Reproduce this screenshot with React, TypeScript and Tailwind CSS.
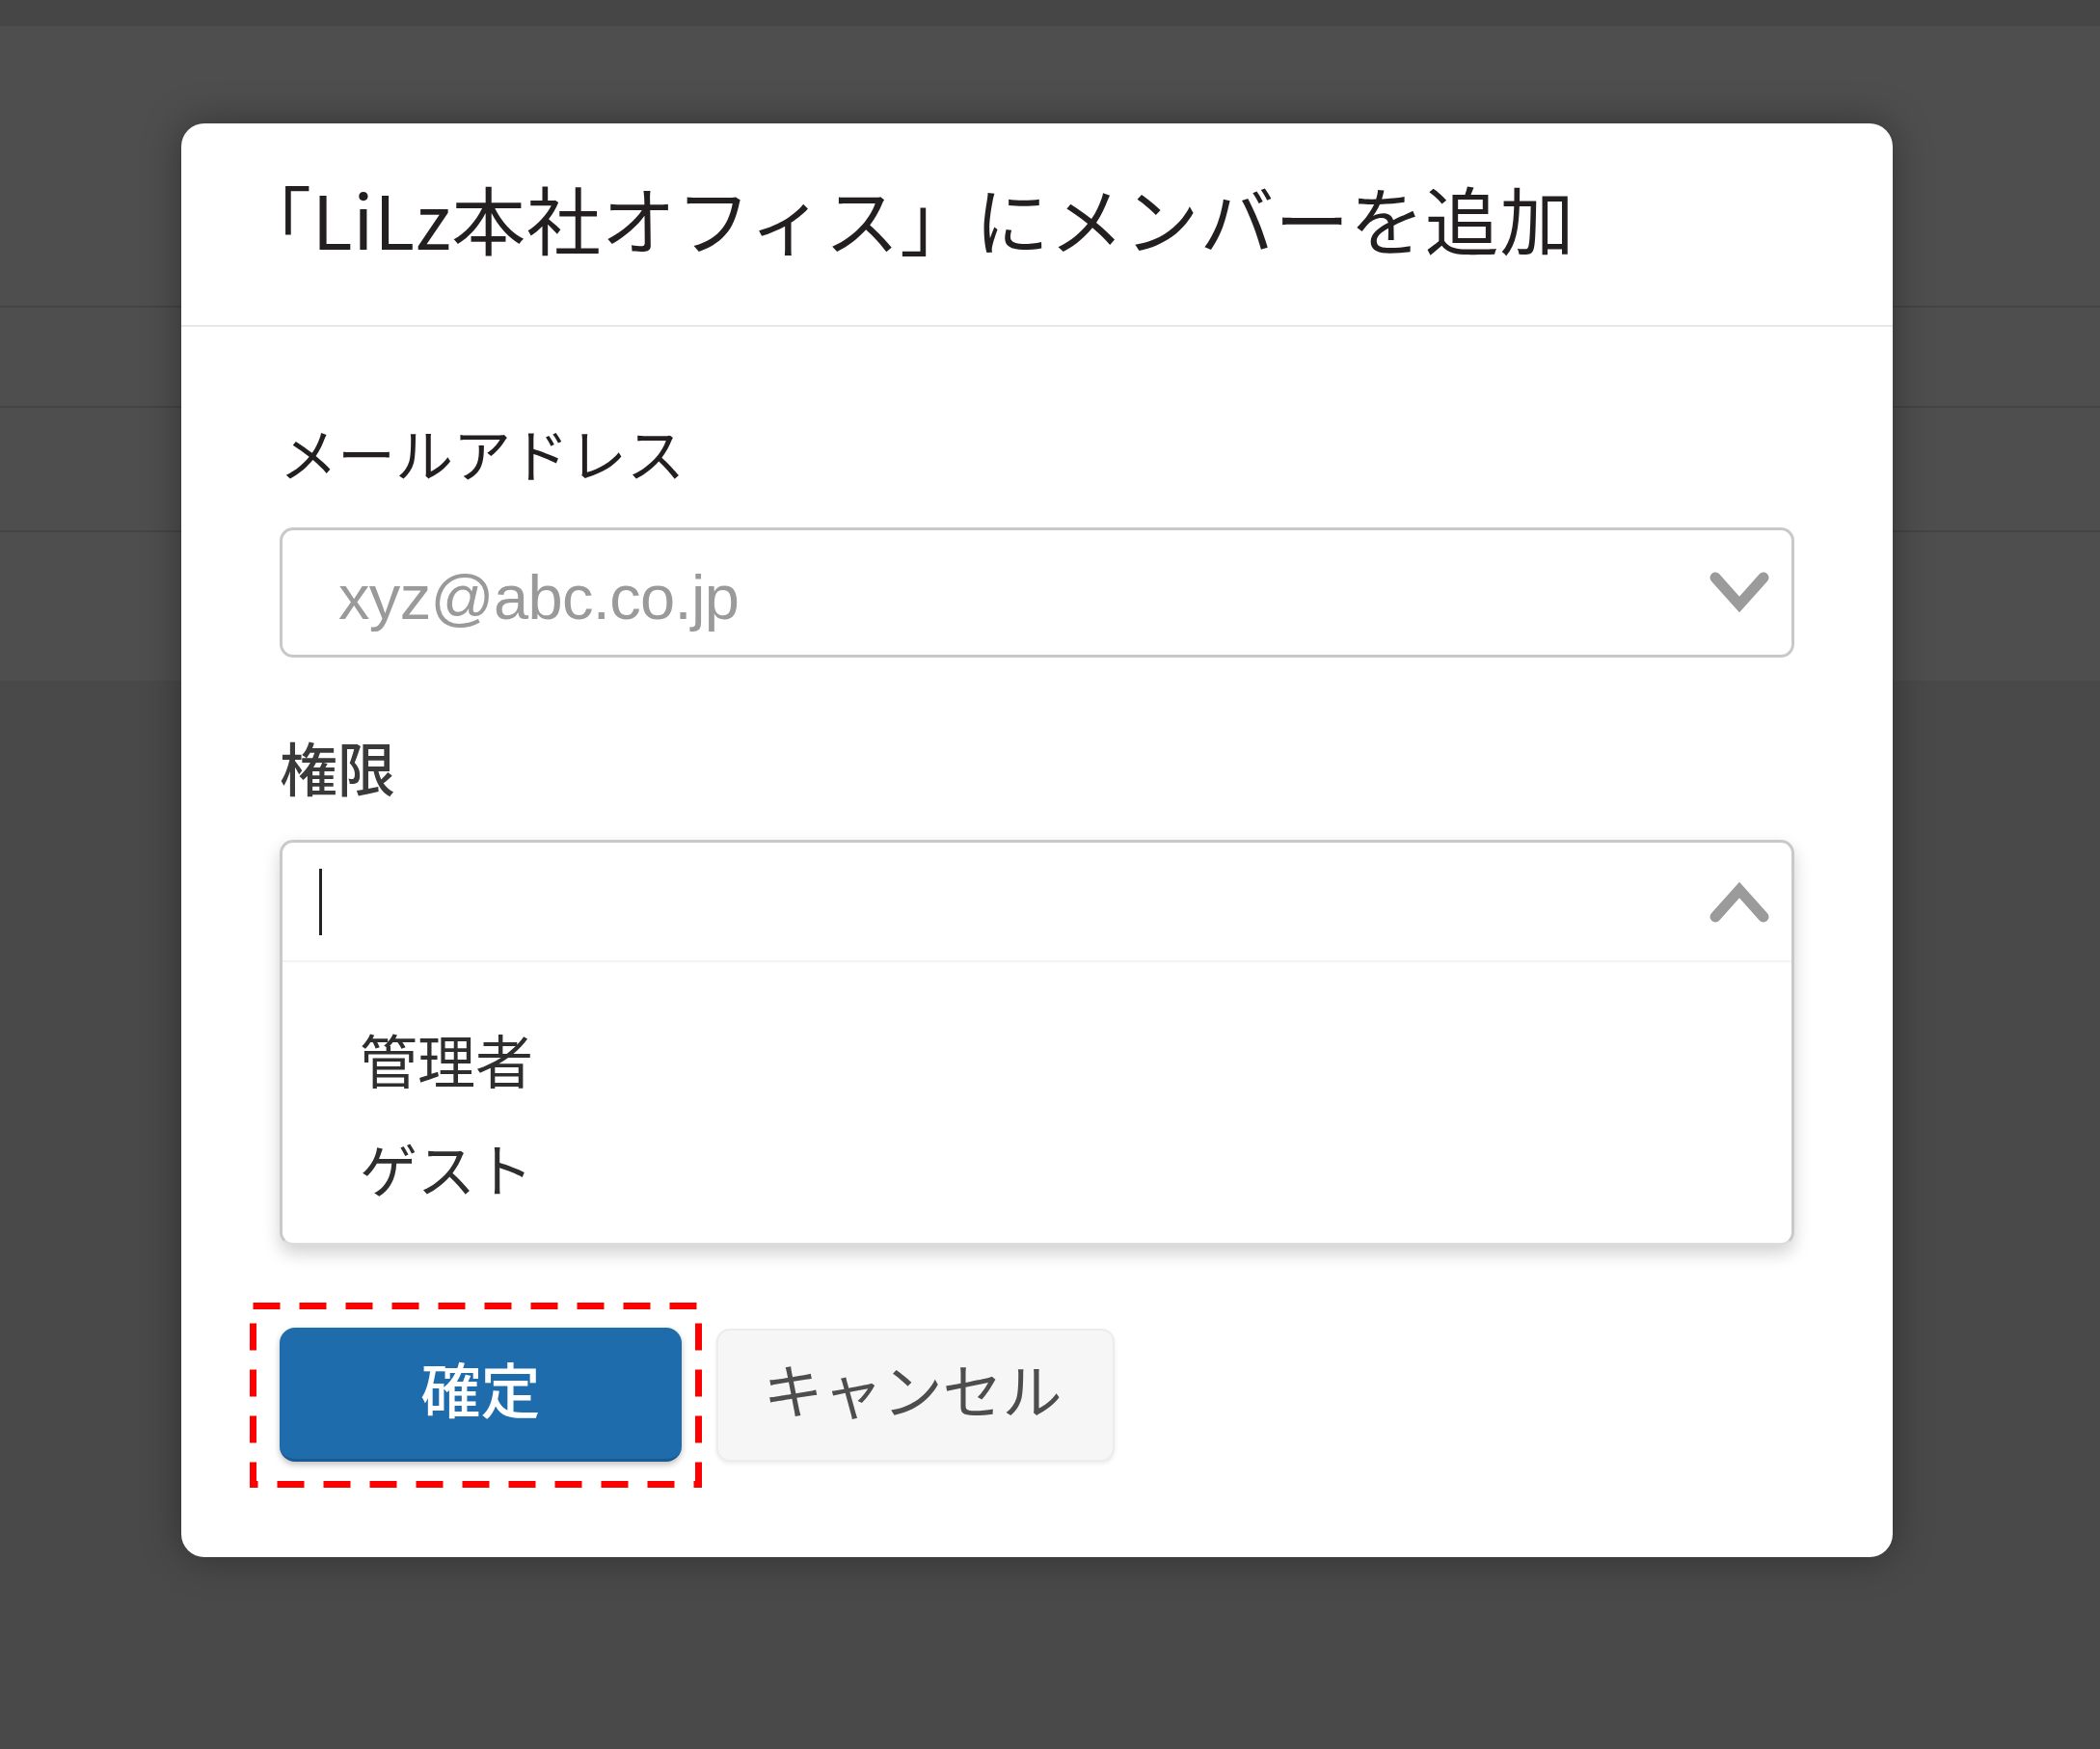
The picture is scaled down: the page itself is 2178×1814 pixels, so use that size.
import React from 'react';

const jp = "font-['Noto_Sans_CJK_JP',sans-serif]";

function Chevron({ up }: { up?: boolean }) {
  return (
    <svg width="62" height="44" viewBox="0 0 62 44" className="shrink-0">
      <polyline
        points={up ? '6,38 31,10 56,38' : '6,6 31,34 56,6'}
        fill="none"
        stroke="#9b9b9b"
        strokeWidth="11"
        strokeLinecap="round"
        strokeLinejoin="miter"
      />
    </svg>
  );
}

function Backdrop() {
  return (
    <div className="flex flex-col">
      <div className="h-[27px] bg-[#464646]" />
      <div className="h-[292px] bg-[#4e4e4e] border-b-2 border-[#444]" />
      <div className="h-[104px] bg-[#4e4e4e] border-b-2 border-[#444]" />
      <div className="h-[129px] bg-[#4e4e4e] border-b-2 border-[#444]" />
      <div className="h-[154px] bg-[#4e4e4e]" />
    </div>
  );
}

export default function App() {
  return (
    <div className={`relative w-[2178px] h-[1814px] overflow-hidden bg-[#494949] ${jp}`}>
      <Backdrop />

      {/* dialog */}
      <div className="absolute left-[188px] top-[128px] w-[1775px] bg-white rounded-[24px] shadow-[0_0_40px_rgba(0,0,0,0.35)]">
        <div className="h-[211px] flex items-center pl-[58px] pb-[14px] border-b-2 border-[#e8e8e8]">
          <h1 className="text-[77px] leading-none text-[#231f20] tracking-[0.01em]">
            「LiLz本社オフィス」にメンバーを追加
          </h1>
        </div>

        <div className="px-[102px] pt-[100px] pb-[99px]">
          <label className="block text-[60px] leading-[60px] text-[#231f20] mb-[48px]">メールアドレス</label>
          <div className="h-[135px] flex items-center justify-between border-[3px] border-[#c9c9c9] rounded-[14px] pl-[58px] pr-[23px]">
            <span className="pt-[10px] font-['Liberation_Sans',sans-serif] text-[65px] text-[#9a9a9a] tracking-[-0.01em]">
              xyz@abc.co.jp
            </span>
            <Chevron />
          </div>

          <label className="block mt-[83px] mb-[46px] text-[60px] leading-[60px] text-[#3a3a3a] font-medium">権限</label>
          <div className="border-[3px] border-[#c9c9c9] border-b-[#dcdcdc] rounded-[14px] shadow-[0_8px_18px_rgba(0,0,0,0.18)]">
            <div className="h-[124px] flex items-center justify-between pl-[38px] pr-[23px] border-b-2 border-[#f3f3f3]">
              <span className="w-[3px] h-[69px] bg-[#222]" />
              <Chevron up />
            </div>
            <ul className="pt-[43px] pb-[22px] pl-[80px] text-[60px] leading-[113px] text-[#2e2e2e]">
              <li>管理者</li>
              <li>ゲスト</li>
            </ul>
          </div>

          <div className="mt-[85px] flex items-center gap-[36px]">
            <div className="relative">
              <button className="w-[417px] h-[139px] pb-[12px] rounded-[16px] bg-[#1f6cad] border-b-[3px] border-[#195a91] text-white text-[62px] font-medium shadow-[0_3px_6px_rgba(0,0,0,0.25)]">
                確定
              </button>
              <svg
                className="absolute left-[-31px] top-[-26px] pointer-events-none"
                width="469"
                height="192"
                viewBox="0 0 469 192"
              >
                <rect
                  x="3.5"
                  y="3.5"
                  width="462"
                  height="185"
                  fill="none"
                  stroke="#ff0000"
                  strokeWidth="7"
                  strokeDasharray="28 20"
                />
              </svg>
            </div>
            <button className="w-[413px] h-[138px] pb-[12px] pr-[6px] rounded-[14px] bg-[#f6f6f6] border-2 border-[#ececec] text-[62px] text-[#4d4d4d] shadow-[0_2px_4px_rgba(0,0,0,0.08)]">
              キャンセル
            </button>
          </div>
        </div>
      </div>
    </div>
  );
}
